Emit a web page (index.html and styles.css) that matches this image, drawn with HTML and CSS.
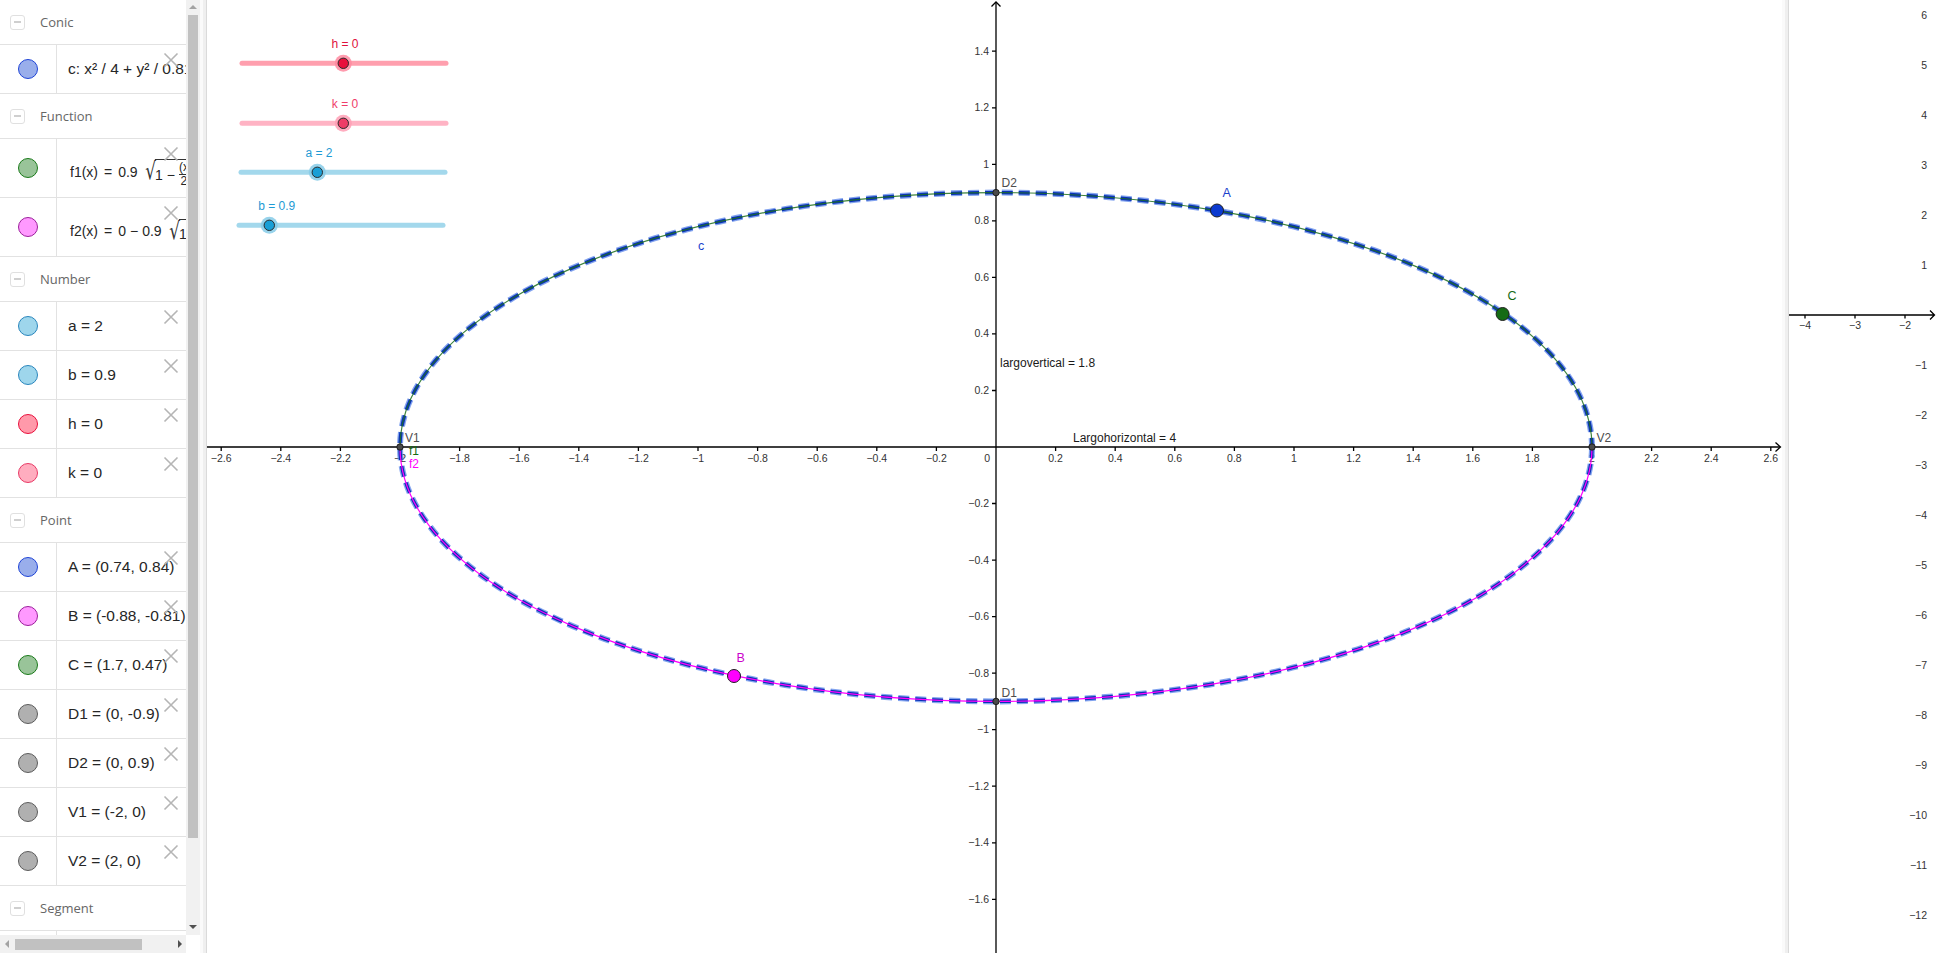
FILE: index.html
```html
<!DOCTYPE html>
<html>
<head>
<meta charset="utf-8">
<title>GeoGebra - Elipse</title>
<link rel="stylesheet" href="styles.css">
</head>
<body>
<aside class="algebra">
  <div class="alg-list">
    <div class="group-head"><span class="collapse"></span><span>Conic</span></div>
    <div class="row">
      <div class="marble"><span class="dot dot-blue"></span></div>
      <div class="expr">c: x² / 4 + y² / 0.81</div>
      <svg class="del" viewBox="0 0 16 16"><path d="M1.5 1.5L14.5 14.5M14.5 1.5L1.5 14.5"/></svg>
    </div>
    <div class="group-head"><span class="collapse"></span><span>Function</span></div>
    <div class="row tall">
      <div class="marble"><span class="dot dot-green"></span></div>
      <div class="expr math">f1(x)<span class="op">=</span>0.9<span class="sqrt"><span class="rad">√</span><span class="radicand">1<span class="op sm">−</span><span class="frac"><span class="num">(x</span><span class="den">2</span></span></span></span></div>
      <svg class="del" viewBox="0 0 16 16"><path d="M1.5 1.5L14.5 14.5M14.5 1.5L1.5 14.5"/></svg>
    </div>
    <div class="row tall">
      <div class="marble"><span class="dot dot-magenta"></span></div>
      <div class="expr math">f2(x)<span class="op">=</span>0<span class="op sm">−</span>0.9<span class="sqrt"><span class="rad">√</span><span class="radicand">1<span class="op sm">−</span></span></span></div>
      <svg class="del" viewBox="0 0 16 16"><path d="M1.5 1.5L14.5 14.5M14.5 1.5L1.5 14.5"/></svg>
    </div>
    <div class="group-head"><span class="collapse"></span><span>Number</span></div>
    <div class="row">
      <div class="marble"><span class="dot dot-sky"></span></div>
      <div class="expr">a = 2</div>
      <svg class="del" viewBox="0 0 16 16"><path d="M1.5 1.5L14.5 14.5M14.5 1.5L1.5 14.5"/></svg>
    </div>
    <div class="row">
      <div class="marble"><span class="dot dot-sky"></span></div>
      <div class="expr">b = 0.9</div>
      <svg class="del" viewBox="0 0 16 16"><path d="M1.5 1.5L14.5 14.5M14.5 1.5L1.5 14.5"/></svg>
    </div>
    <div class="row">
      <div class="marble"><span class="dot dot-red"></span></div>
      <div class="expr">h = 0</div>
      <svg class="del" viewBox="0 0 16 16"><path d="M1.5 1.5L14.5 14.5M14.5 1.5L1.5 14.5"/></svg>
    </div>
    <div class="row">
      <div class="marble"><span class="dot dot-pink"></span></div>
      <div class="expr">k = 0</div>
      <svg class="del" viewBox="0 0 16 16"><path d="M1.5 1.5L14.5 14.5M14.5 1.5L1.5 14.5"/></svg>
    </div>
    <div class="group-head"><span class="collapse"></span><span>Point</span></div>
    <div class="row">
      <div class="marble"><span class="dot dot-blue"></span></div>
      <div class="expr">A = (0.74, 0.84)</div>
      <svg class="del" viewBox="0 0 16 16"><path d="M1.5 1.5L14.5 14.5M14.5 1.5L1.5 14.5"/></svg>
    </div>
    <div class="row">
      <div class="marble"><span class="dot dot-magenta"></span></div>
      <div class="expr">B = (-0.88, -0.81)</div>
      <svg class="del" viewBox="0 0 16 16"><path d="M1.5 1.5L14.5 14.5M14.5 1.5L1.5 14.5"/></svg>
    </div>
    <div class="row">
      <div class="marble"><span class="dot dot-green"></span></div>
      <div class="expr">C = (1.7, 0.47)</div>
      <svg class="del" viewBox="0 0 16 16"><path d="M1.5 1.5L14.5 14.5M14.5 1.5L1.5 14.5"/></svg>
    </div>
    <div class="row">
      <div class="marble"><span class="dot dot-grey"></span></div>
      <div class="expr">D1 = (0, -0.9)</div>
      <svg class="del" viewBox="0 0 16 16"><path d="M1.5 1.5L14.5 14.5M14.5 1.5L1.5 14.5"/></svg>
    </div>
    <div class="row">
      <div class="marble"><span class="dot dot-grey"></span></div>
      <div class="expr">D2 = (0, 0.9)</div>
      <svg class="del" viewBox="0 0 16 16"><path d="M1.5 1.5L14.5 14.5M14.5 1.5L1.5 14.5"/></svg>
    </div>
    <div class="row">
      <div class="marble"><span class="dot dot-grey"></span></div>
      <div class="expr">V1 = (-2, 0)</div>
      <svg class="del" viewBox="0 0 16 16"><path d="M1.5 1.5L14.5 14.5M14.5 1.5L1.5 14.5"/></svg>
    </div>
    <div class="row">
      <div class="marble"><span class="dot dot-grey"></span></div>
      <div class="expr">V2 = (2, 0)</div>
      <svg class="del" viewBox="0 0 16 16"><path d="M1.5 1.5L14.5 14.5M14.5 1.5L1.5 14.5"/></svg>
    </div>
    <div class="group-head"><span class="collapse"></span><span>Segment</span></div>
    <div class="row">
      <div class="marble"><span class="dot dot-grey"></span></div>
      <div class="expr">largovertical = 1.8</div>
    </div>
  </div>
  <div class="vscroll"><span class="arr arr-up"></span><span class="vthumb"></span><span class="arr arr-down"></span></div>
  <div class="hscroll"><span class="arr arr-left"></span><span class="hthumb"></span><span class="arr arr-right"></span></div>
  <div class="corner"></div>
</aside>

<div class="splitter"></div>

<main class="graphics">
  <svg class="plot" viewBox="207 0 1575 953" width="1575" height="953">
    <!-- sliders -->
    <g class="slider">
      <line class="track track-h" x1="242" y1="63.3" x2="446" y2="63.3"/>
      <circle class="halo halo-h" cx="343.3" cy="63.3" r="8.5"/>
      <circle class="knob knob-h" cx="343.3" cy="63.3" r="5.2"/>
      <text class="slabel lab-h" x="345" y="47.5">h = 0</text>
    </g>
    <g class="slider">
      <line class="track track-k" x1="242" y1="123.3" x2="446" y2="123.3"/>
      <circle class="halo halo-k" cx="343.3" cy="123.3" r="8.5"/>
      <circle class="knob knob-k" cx="343.3" cy="123.3" r="5.2"/>
      <text class="slabel lab-k" x="345" y="108.3">k = 0</text>
    </g>
    <g class="slider">
      <line class="track track-a" x1="241" y1="172.3" x2="445" y2="172.3"/>
      <circle class="halo halo-a" cx="317.3" cy="172.3" r="8.5"/>
      <circle class="knob knob-a" cx="317.3" cy="172.3" r="5.2"/>
      <text class="slabel lab-a" x="319" y="157.3">a = 2</text>
    </g>
    <g class="slider">
      <line class="track track-a" x1="239" y1="225.3" x2="443" y2="225.3"/>
      <circle class="halo halo-a" cx="269.3" cy="225.3" r="8.5"/>
      <circle class="knob knob-a" cx="269.3" cy="225.3" r="5.2"/>
      <text class="slabel lab-a" x="276.7" y="210.3">b = 0.9</text>
    </g>

    <!-- axes -->
    <path class="axis" d="M207 447H1780M996 953V2"/>
    <path class="axis" d="M1775.5 442.5L1780.5 447L1775.5 451.5M991.5 6.5L996 2L1000.5 6.5"/>
    <path class="axis" d="M221.2 447v4M280.8 447v4M340.4 447v4M400 447v4M459.6 447v4M519.2 447v4M578.8 447v4M638.4 447v4M698 447v4M757.6 447v4M817.2 447v4M876.8 447v4M936.4 447v4M1055.6 447v4M1115.2 447v4M1174.8 447v4M1234.4 447v4M1294 447v4M1353.6 447v4M1413.2 447v4M1472.8 447v4M1532.4 447v4M1592 447v4M1651.6 447v4M1711.2 447v4M1770.8 447v4"/>
    <path class="axis" d="M992 51.2h4M992 107.8h4M992 164.3h4M992 220.8h4M992 277.4h4M992 333.9h4M992 390.5h4M992 503.5h4M992 560.1h4M992 616.6h4M992 673.2h4M992 729.7h4M992 786.2h4M992 842.8h4M992 899.3h4"/>

    <g class="xlabels">
      <text x="221.2" y="461.5">−2.6</text>
      <text x="280.8" y="461.5">−2.4</text>
      <text x="340.4" y="461.5">−2.2</text>
      <text x="400" y="461.5">−2</text>
      <text x="459.6" y="461.5">−1.8</text>
      <text x="519.2" y="461.5">−1.6</text>
      <text x="578.8" y="461.5">−1.4</text>
      <text x="638.4" y="461.5">−1.2</text>
      <text x="698" y="461.5">−1</text>
      <text x="757.6" y="461.5">−0.8</text>
      <text x="817.2" y="461.5">−0.6</text>
      <text x="876.8" y="461.5">−0.4</text>
      <text x="936.4" y="461.5">−0.2</text>
      <text x="1055.6" y="461.5">0.2</text>
      <text x="1115.2" y="461.5">0.4</text>
      <text x="1174.8" y="461.5">0.6</text>
      <text x="1234.4" y="461.5">0.8</text>
      <text x="1294" y="461.5">1</text>
      <text x="1353.6" y="461.5">1.2</text>
      <text x="1413.2" y="461.5">1.4</text>
      <text x="1472.8" y="461.5">1.6</text>
      <text x="1532.4" y="461.5">1.8</text>
      <text x="1592" y="461.5">2</text>
      <text x="1651.6" y="461.5">2.2</text>
      <text x="1711.2" y="461.5">2.4</text>
      <text x="1770.8" y="461.5">2.6</text>
    </g>
    <g class="ylabels">
      <text x="990" y="461.5">0</text>
      <text x="989" y="54.7">1.4</text>
      <text x="989" y="111.3">1.2</text>
      <text x="989" y="167.8">1</text>
      <text x="989" y="224.3">0.8</text>
      <text x="989" y="280.9">0.6</text>
      <text x="989" y="337.4">0.4</text>
      <text x="989" y="394">0.2</text>
      <text x="989" y="507">−0.2</text>
      <text x="989" y="563.6">−0.4</text>
      <text x="989" y="620.1">−0.6</text>
      <text x="989" y="676.7">−0.8</text>
      <text x="989" y="733.2">−1</text>
      <text x="989" y="789.7">−1.2</text>
      <text x="989" y="846.3">−1.4</text>
      <text x="989" y="902.8">−1.6</text>
    </g>

    <!-- curves -->
    <ellipse class="conic-halo" cx="996" cy="447" rx="596" ry="254.4"/>
    <ellipse class="conic" cx="996" cy="447" rx="596" ry="254.4"/>
    <path class="fn-f1" d="M400 447A596 254.4 0 0 1 1592 447"/>
    <path class="fn-f2" d="M400 447A596 254.4 0 0 0 1592 447"/>

    <!-- texts -->
    <text class="lbl lbl-c" x="698" y="250">c</text>
    <text class="lbl lbl-f1" x="409" y="455">f1</text>
    <text class="lbl lbl-f2" x="409" y="468">f2</text>
    <text class="lbl lbl-txt" x="1000" y="367">largovertical = 1.8</text>
    <text class="lbl lbl-txt" x="1073" y="441.5">Largohorizontal = 4</text>

    <!-- points -->
    <circle class="pt-small" cx="400" cy="447" r="3.2"/>
    <circle class="pt-small" cx="1592" cy="447" r="3.2"/>
    <circle class="pt-small" cx="996" cy="192.6" r="3.2"/>
    <circle class="pt-small" cx="996" cy="701.4" r="3.2"/>
    <circle class="pt pt-a" cx="1217" cy="210.5" r="6.5"/>
    <circle class="pt pt-b" cx="734" cy="676" r="6.5"/>
    <circle class="pt pt-c" cx="1502.6" cy="314" r="6.5"/>

    <text class="lbl lbl-pt" x="405" y="442">V1</text>
    <text class="lbl lbl-pt" x="1596.5" y="442">V2</text>
    <text class="lbl lbl-pt" x="1001.5" y="187">D2</text>
    <text class="lbl lbl-pt" x="1001.5" y="697">D1</text>
    <text class="lbl lbl-a" x="1222.5" y="197">A</text>
    <text class="lbl lbl-b" x="736.5" y="662">B</text>
    <text class="lbl lbl-cp" x="1507.5" y="300">C</text>
  </svg>
</main>

<div class="splitter"></div>

<section class="graphics2">
  <svg class="plot" viewBox="1790 0 148 953" width="148" height="953">
    <path class="axis" d="M1790 315H1935.5M1931 310.5L1935.5 315L1931 319.5M1806 315v3.5M1856 315v3.5M1906 315v3.5"/>
    <g class="xlabels">
      <text x="1806" y="328.5">−4</text>
      <text x="1856" y="328.5">−3</text>
      <text x="1906" y="328.5">−2</text>
    </g>
    <g class="ylabels">
      <text x="1928" y="18.5">6</text>
      <text x="1928" y="68.5">5</text>
      <text x="1928" y="118.5">4</text>
      <text x="1928" y="168.5">3</text>
      <text x="1928" y="218.5">2</text>
      <text x="1928" y="268.5">1</text>
      <text x="1928" y="368.5">−1</text>
      <text x="1928" y="418.5">−2</text>
      <text x="1928" y="468.5">−3</text>
      <text x="1928" y="518.5">−4</text>
      <text x="1928" y="568.5">−5</text>
      <text x="1928" y="618.5">−6</text>
      <text x="1928" y="668.5">−7</text>
      <text x="1928" y="718.5">−8</text>
      <text x="1928" y="768.5">−9</text>
      <text x="1928" y="818.5">−10</text>
      <text x="1928" y="868.5">−11</text>
      <text x="1928" y="918.5">−12</text>
    </g>
  </svg>
</section>
</body>
</html>
```

FILE: styles.css
```css
* { box-sizing: border-box; }

html, body {
  margin: 0;
  padding: 0;
}

body {
  width: 1938px;
  height: 953px;
  overflow: hidden;
  display: flex;
  background: #ffffff;
  font-family: "Liberation Sans", Arial, sans-serif;
}

/* ---------- Algebra view ---------- */
.algebra {
  flex: none;
  width: 200px;
  height: 953px;
  display: grid;
  grid-template-columns: 186px 14px;
  grid-template-rows: 935px 18px;
  background: #fff;
}

.alg-list {
  grid-column: 1;
  grid-row: 1;
  overflow: hidden;
  display: flex;
  flex-direction: column;
}

.group-head {
  flex: none;
  height: 45px;
  border-bottom: 1px solid #e2e2e2;
  display: flex;
  align-items: center;
  gap: 15px;
  padding-left: 10px;
  font-family: "Open Sans", "Liberation Sans", sans-serif;
  font-size: 13px;
  color: #666;
}

.collapse {
  width: 15px;
  height: 15px;
  border: 1px solid #e0e0e0;
  border-radius: 3px;
  display: flex;
  align-items: center;
  justify-content: center;
}

.collapse::before {
  content: "";
  width: 7px;
  height: 2px;
  background: #cfcfcf;
}

.row {
  position: relative;
  flex: none;
  height: 49px;
  border-bottom: 1px solid #e2e2e2;
  display: flex;
}

.row.tall { height: 59px; }

.marble {
  flex: none;
  width: 57px;
  border-right: 1px solid #e2e2e2;
  display: flex;
  align-items: center;
  justify-content: center;
}

.dot {
  width: 20px;
  height: 20px;
  border-radius: 50%;
  border: 1px solid;
}

.dot-blue    { background: #99aeeb; border-color: #1f44d6; }
.dot-green   { background: #99c499; border-color: #1a7a1a; }
.dot-magenta { background: #ff99ff; border-color: #9b1f9b; }
.dot-sky     { background: #9ed6ec; border-color: #2a86bd; }
.dot-red     { background: #ff99aa; border-color: #e8103c; }
.dot-pink    { background: #ffadbf; border-color: #e83a66; }
.dot-grey    { background: #b0b0b0; border-color: #5c5c5c; }

.expr {
  flex: none;
  padding-left: 11px;
  display: flex;
  align-items: center;
  white-space: nowrap;
  font-size: 15.5px;
  color: #262626;
}

.expr.math {
  font-size: 14px;
  padding-left: 13px;
  padding-top: 8px;
}

.op { margin: 0 6px; }
.op.sm { margin: 0 4px; }

.sqrt {
  display: inline-flex;
  align-items: stretch;
  margin-left: 5px;
}

.rad {
  font-family: "DejaVu Sans", sans-serif;
  font-size: 24px;
  line-height: 30px;
  transform: scaleX(0.7);
  margin-right: -3px;
  color: #333;
}

.radicand {
  display: inline-flex;
  align-items: center;
  border-top: 1px solid #333;
  padding-top: 1px;
  margin-top: 3px;
}

.frac {
  display: inline-flex;
  flex-direction: column;
  align-items: center;
  font-size: 12px;
  line-height: 13px;
}

.num { border-bottom: 1px solid #333; }

.del {
  position: absolute;
  left: 163px;
  top: 7px;
  width: 16px;
  height: 16px;
  fill: none;
  stroke: #b5b5b5;
  stroke-width: 1.6;
}

/* scrollbars */
.vscroll {
  grid-column: 2;
  grid-row: 1;
  background: #f1f1f1;
  display: flex;
  flex-direction: column;
  align-items: center;
  padding: 5px 0 6px;
}

.vthumb {
  width: 10px;
  height: 823px;
  margin-top: 6px;
  background: #c1c1c1;
}

.hscroll {
  grid-column: 1;
  grid-row: 2;
  background: #f1f1f1;
  display: flex;
  align-items: center;
  padding: 0 4px 0 5px;
}

.hthumb {
  width: 127px;
  height: 11px;
  margin-left: 6px;
  background: #c1c1c1;
}

.corner {
  grid-column: 2;
  grid-row: 2;
  background: #fff;
}

.arr { width: 0; height: 0; }

.arr-up {
  border-left: 4px solid transparent;
  border-right: 4px solid transparent;
  border-bottom: 4px solid #a3a3a3;
}

.arr-down {
  margin-top: auto;
  border-left: 4px solid transparent;
  border-right: 4px solid transparent;
  border-top: 4px solid #505050;
}

.arr-left {
  border-top: 4px solid transparent;
  border-bottom: 4px solid transparent;
  border-right: 4px solid #a3a3a3;
}

.arr-right {
  margin-left: auto;
  border-top: 4px solid transparent;
  border-bottom: 4px solid transparent;
  border-left: 4px solid #505050;
}

/* ---------- splitters ---------- */
.splitter {
  flex: none;
  width: 7px;
  height: 953px;
  background: #efefef;
  border-left: 3px solid #fafafa;
  border-right: 1px solid #dadada;
}

.graphics2 + .splitter { width: 8px; }

/* ---------- graphics views ---------- */
.graphics {
  flex: none;
  width: 1575px;
  height: 953px;
  background: #fff;
}

.graphics2 {
  flex: none;
  width: 148px;
  height: 953px;
  background: #fff;
}

.plot {
  display: block;
  font-family: "Liberation Sans", Arial, sans-serif;
}

.axis {
  fill: none;
  stroke: #000;
  stroke-width: 1.3;
}

.xlabels text {
  font-size: 10.5px;
  fill: #333;
  text-anchor: middle;
}

.ylabels text {
  font-size: 10.5px;
  fill: #333;
  text-anchor: end;
}

.conic-halo {
  fill: none;
  stroke: #5a86ea;
  stroke-width: 6;
  stroke-dasharray: 11 6;
  opacity: 0.75;
}

.conic {
  fill: none;
  stroke: #0b33b5;
  stroke-width: 3.4;
  stroke-dasharray: 11 6;
}

.fn-f1 {
  fill: none;
  stroke: #1d6e1d;
  stroke-width: 1.2;
  opacity: 0.85;
}

.fn-f2 {
  fill: none;
  stroke: #ff00ff;
  stroke-width: 1.2;
}

.pt {
  stroke: #1e1e1e;
  stroke-width: 1;
}

.pt-a { fill: #0c3ad0; }
.pt-b { fill: #ff00ff; }
.pt-c { fill: #146b14; }

.pt-small {
  fill: #4a4a4a;
  stroke: #1e1e1e;
  stroke-width: 1;
}

.lbl { font-size: 12px; }
.lbl-pt { fill: #4d4d4d; }
.lbl-txt { fill: #1a1a1a; }
.lbl-c { fill: #1a3fcc; font-size: 12.5px; }
.lbl-a { fill: #1a3fcc; font-size: 12.5px; }
.lbl-b { fill: #cc00cc; font-size: 12.5px; }
.lbl-cp { fill: #146b14; font-size: 12.5px; }
.lbl-f1 { fill: #146b14; }
.lbl-f2 { fill: #ff00ff; }

/* sliders */
.track {
  stroke-width: 5;
  stroke-linecap: round;
}

.track-h { stroke: #ff9fae; }
.track-k { stroke: #ffb3c4; }
.track-a { stroke: #a3d8ec; }

.halo { opacity: 0.85; }
.halo-h { fill: #ff8aa0; }
.halo-k { fill: #ff9fb5; }
.halo-a { fill: #86cbe8; }

.knob {
  stroke: #2b2b2b;
  stroke-width: 1;
}

.knob-h { fill: #e8103c; }
.knob-k { fill: #ee3d66; }
.knob-a { fill: #1a9fd6; }

.slabel {
  font-size: 12px;
  text-anchor: middle;
}

.lab-h { fill: #e0103c; }
.lab-k { fill: #ef3e6a; }
.lab-a { fill: #1e9ad4; }
```
